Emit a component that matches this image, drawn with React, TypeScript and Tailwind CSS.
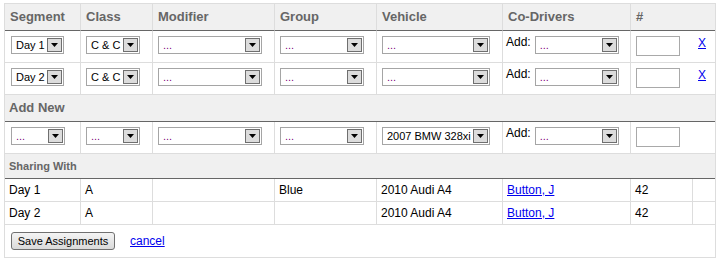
const cols = [76, 72, 122, 102, 126, 128, 62, 22];

function Select({ text, w, dots }: { text: string; w: number; dots?: boolean }) {
  return (
    <div
      className="flex h-[18px] border border-[#a5a5a5] bg-white p-[1px]"
      style={{ width: w }}
    >
      <span
        className={
          "flex-1 overflow-hidden whitespace-nowrap pl-[3px] text-[11px] leading-[14px] " +
          (dots ? "text-[#800080]" : "text-black")
        }
      >
        {text}
      </span>
      <div className="flex w-[15px] items-center justify-center border border-[#6f6f6f] bg-[#dcdcdc]">
        <svg width="7" height="4" viewBox="0 0 7 4">
          <path d="M0 0h7L3.5 4z" fill="#000" />
        </svg>
      </div>
    </div>
  );
}

function NumBox() {
  return <div className="h-[20px] w-[44px] border border-[#a9a9a9] bg-white" />;
}

function EditRow({ day, klass, vehicle, x }: { day: string; klass: string; vehicle: string; x: boolean }) {
  const dots = day === "...";
  return (
    <tr className="h-[32px]">
      <td className="border-b border-r border-[#ddd] pl-[6px] pt-[5px] align-top">
        <Select text={day} w={dots ? 54 : 53} dots={dots} />
      </td>
      <td className="border-b border-r border-[#ddd] pl-[5px] pt-[5px] align-top">
        <Select text={klass} w={54} dots={klass === "..."} />
      </td>
      <td className="border-b border-r border-[#ddd] pl-[5px] pt-[5px] align-top">
        <Select text="..." w={104} dots />
      </td>
      <td className="border-b border-r border-[#ddd] pl-[5px] pt-[5px] align-top">
        <Select text="..." w={84} dots />
      </td>
      <td className="border-b border-r border-[#ddd] pl-[5px] pt-[5px] align-top">
        <Select text={vehicle} w={108} dots={vehicle === "..."} />
      </td>
      <td className="border-b border-r border-[#ddd] pl-[3px] pt-[5px] align-top">
        <div className="flex items-start gap-[4px]">
          <span className="-mt-[1px] text-[12px] leading-[14px] text-black">Add:</span>
          <Select text="..." w={84} dots />
        </div>
      </td>
      <td colSpan={2} className="border-b border-[#ddd] pl-[5px] pt-[5px] align-top">
        <div className="flex items-start gap-[18px]">
          <NumBox />
          {x && <a href="#" className="text-[12px] leading-[14px] text-[#0000ee] underline">X</a>}
        </div>
      </td>
    </tr>
  );
}

function ShareRow({ day, group }: { day: string; group: string }) {
  const td = "border-b border-r border-[#ddd] px-[4px] text-[12px] text-black align-middle";
  return (
    <tr className="h-[23px]">
      <td className={td}>{day}</td>
      <td className={td}>A</td>
      <td className={td}></td>
      <td className={td}>{group}</td>
      <td className={td}>2010 Audi A4</td>
      <td className={td}>
        <a href="#" className="text-[#0000ee] underline">Button, J</a>
      </td>
      <td className={td}>42</td>
      <td className="border-b border-[#ddd]"></td>
    </tr>
  );
}

export default function App() {
  const th = "border-b border-r border-[#666] border-r-[#ddd] px-[5px] text-left text-[13px] font-bold text-[#666] align-middle";
  return (
    <div className="h-[262px] w-[719px] bg-white pl-[4px] pt-[3px] font-['Liberation_Sans',Arial,sans-serif]">
      <div className="w-[712px] border border-[#ddd]">
        <table className="w-[710px] table-fixed border-separate border-spacing-0">
          <colgroup>
            {cols.map((c, i) => (
              <col key={i} style={{ width: c }} />
            ))}
          </colgroup>
          <tbody>
            <tr className="h-[27px] bg-[#f0f0f0]">
              <th className={th}>Segment</th>
              <th className={th}>Class</th>
              <th className={th}>Modifier</th>
              <th className={th}>Group</th>
              <th className={th}>Vehicle</th>
              <th className={th}>Co-Drivers</th>
              <th colSpan={2} className="border-b border-[#666] px-[5px] text-left text-[13px] font-bold text-[#666] align-middle">#</th>
            </tr>
            <EditRow day="Day 1" klass="C & C" vehicle="..." x />
            <EditRow day="Day 2" klass="C & C" vehicle="..." x />
            <tr className="h-[27px] bg-[#f0f0f0]">
              <td colSpan={8} className="border-b border-[#666] px-[4px] text-[13px] font-bold text-[#666] align-middle">
                Add New
              </td>
            </tr>
            <EditRow day="..." klass="..." vehicle="2007 BMW 328xi" x={false} />
            <tr className="h-[25px] bg-[#f0f0f0]">
              <td colSpan={8} className="border-b border-[#666] px-[4px] text-[11px] font-bold text-[#666] align-middle">
                Sharing With
              </td>
            </tr>
            <ShareRow day="Day 1" group="Blue" />
            <ShareRow day="Day 2" group="" />
          </tbody>
        </table>
        <div className="flex h-[32px] items-center gap-[15px] pl-[6px] pb-[1px]">
          <button className="h-[18px] w-[104px] rounded-[3px] border border-[#707070] bg-gradient-to-b from-[#f4f4f4] to-[#dadada] text-[11px] leading-[14px] text-black">
            Save Assignments
          </button>
          <a href="#" className="text-[12px] text-[#0000ee] underline">cancel</a>
        </div>
      </div>
    </div>
  );
}
